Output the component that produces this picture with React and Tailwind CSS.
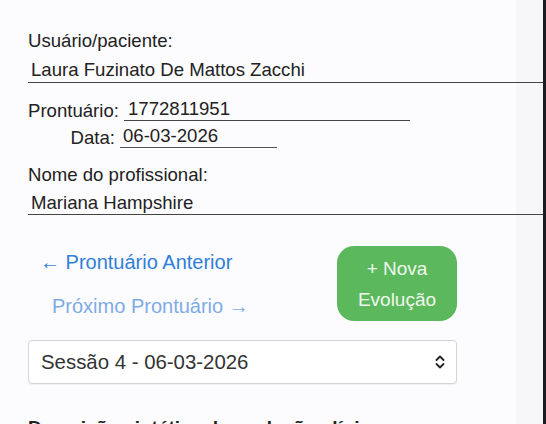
import { useState } from "react";

function Chevrons() {
  return (
    <svg width="10" height="14" viewBox="0 0 10 14" fill="none" stroke="#222" strokeWidth="1.8" strokeLinecap="round" strokeLinejoin="round">
      <path d="M1.5 5 5 1.5 8.5 5" />
      <path d="M1.5 9 5 12.5 8.5 9" />
    </svg>
  );
}

export default function App() {
  const [form, setForm] = useState({
    paciente: "Laura Fuzinato De Mattos Zacchi",
    prontuario: "1772811951",
    data: "06-03-2026",
    profissional: "Mariana Hampshire",
  });
  const [sessao, setSessao] = useState("4");

  const handleChange = (field, value) => {
    setForm((prev) => ({ ...prev, [field]: value }));
  };

  return (
    <div
      className="flex h-[424px] w-[546px] overflow-hidden bg-[#1c1b22] text-[#222]"
      style={{ fontFamily: '"Liberation Sans", Arial, sans-serif' }}
    >
      <div className="w-[543px] shrink-0 bg-[linear-gradient(to_right,#fcfbfd_516px,#f7f6f9_516px)] pl-[28px] pt-[31px]">
        <label className="block text-[18.6px] leading-[20px]">Usuário/paciente:</label>
        <input
          value={form.paciente}
          onChange={(e) => handleChange("paciente", e.target.value)}
          className="mt-[6px] block h-[26px] w-[515px] border-b border-[#444] bg-transparent pl-[3px] text-[18.6px] leading-[20px] outline-none"
        />

        <div className="mt-[15px] flex items-end">
          <span className="w-[96px] shrink-0 text-[18.6px] leading-[20px]">Prontuário:</span>
          <input
            value={form.prontuario}
            onChange={(e) => handleChange("prontuario", e.target.value)}
            className="block h-[23px] w-[286px] border-b border-[#444] bg-transparent pl-[4px] text-[18.6px] leading-[20px] outline-none"
          />
        </div>
        <div className="mt-[4px] flex items-end">
          <span className="w-[92px] shrink-0 pr-[5px] text-right text-[18.6px] leading-[20px]">Data:</span>
          <input
            value={form.data}
            onChange={(e) => handleChange("data", e.target.value)}
            className="block h-[23px] w-[157px] border-b border-[#555] bg-transparent pl-[3px] text-[18.6px] leading-[20px] outline-none"
          />
        </div>

        <label className="mt-[17px] block text-[18.6px] leading-[20px]">Nome do profissional:</label>
        <input
          value={form.profissional}
          onChange={(e) => handleChange("profissional", e.target.value)}
          className="mt-[6px] block h-[24px] w-[515px] border-b border-[#444] bg-transparent pl-[3px] text-[18.6px] leading-[20px] outline-none"
        />

        <div className="mt-[31px] flex w-[429px] items-start justify-between">
          <div className="flex flex-col pl-[12px] pt-[4px] text-[20px] leading-[24px]">
            <a href="#" className="text-[#2f7fd9]">← Prontuário Anterior</a>
            <a href="#" className="mt-[20px] pl-[12px] text-[#7eace6]">Próximo Prontuário →</a>
          </div>
          <button className="h-[75px] w-[120px] rounded-[17px] bg-[#5cb85c] text-[19px] leading-[31px] text-[#eef8ee]">
            + Nova
            <br />
            Evolução
          </button>
        </div>

        <div className="relative mt-[19px] w-[429px]">
          <select
            value={sessao}
            onChange={(e) => setSessao(e.target.value)}
            className="block h-[44px] w-full appearance-none rounded-[4px] border border-[#d4d3d8] bg-white pl-[12px] text-[20.4px] text-[#333] shadow-[0_1px_1px_rgba(0,0,0,0.05)] outline-none"
          >
            <option value="4">Sessão 4 - 06-03-2026</option>
            <option value="3">Sessão 3</option>
            <option value="2">Sessão 2</option>
            <option value="1">Sessão 1</option>
          </select>
          <span className="pointer-events-none absolute right-[12px] top-[15px]">
            <Chevrons />
          </span>
        </div>

        <p className="mt-[32px] text-[19px] font-bold leading-[24px]">
          Descrição sintética da evolução clínica
        </p>
      </div>
    </div>
  );
}
